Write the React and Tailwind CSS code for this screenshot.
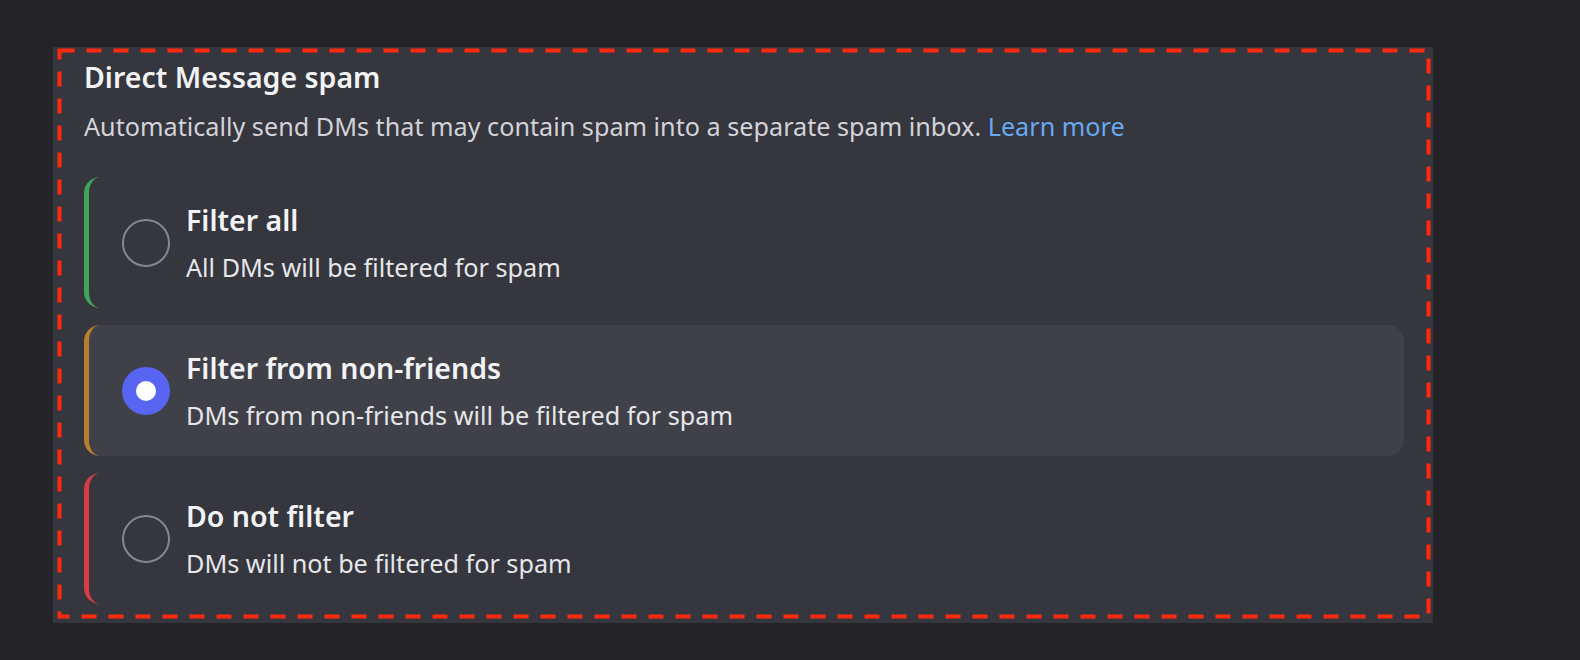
import { useState } from 'react';

const OPTIONS = [
  {
    value: 'ALL',
    label: 'Filter all',
    hint: 'All DMs will be filtered for spam',
    bar: 'border-l-[#3fa55b]',
  },
  {
    value: 'NON_FRIENDS',
    label: 'Filter from non-friends',
    hint: 'DMs from non-friends will be filtered for spam',
    bar: 'border-l-[#b87e2e]',
  },
  {
    value: 'NONE',
    label: 'Do not filter',
    hint: 'DMs will not be filtered for spam',
    bar: 'border-l-[#d83c44]',
  },
];

function Radio({ checked }) {
  if (checked) {
    return (
      <span className="flex items-center justify-center w-12 h-12 shrink-0 rounded-full bg-[#5865f2]">
        <span className="w-5 h-5 rounded-full bg-white" />
      </span>
    );
  }
  return <span className="w-12 h-12 shrink-0 rounded-full border-2 border-[#85878f]" />;
}

export default function App() {
  const [filter, setFilter] = useState('NON_FRIENDS');

  return (
    <div
      className="min-h-screen bg-[#232328] pt-[47px] pl-[53px]"
      style={{ fontFamily: '"Noto Sans", "Open Sans", sans-serif' }}
    >
      <div className="relative w-[1380px] h-[576px] bg-[#35363e] pl-[31px] pr-[29px] pt-[14px]">
        <h2 className="text-[28.5px] leading-[32px] font-semibold text-[#f2f3f5]">
          Direct Message spam
        </h2>
        <p className="mt-[18px] text-[25.2px] leading-[30px] text-[#d2d3d8]">
          Automatically send DMs that may contain spam into a separate spam inbox.{' '}
          <a className="text-[#68a9f2] cursor-pointer">Learn more</a>
        </p>

        {/* Options */}
        <div className="mt-[36px] flex flex-col gap-[17px]">
          {OPTIONS.map((opt) => {
            const active = filter === opt.value;
            return (
              <button
                key={opt.value}
                onClick={() => setFilter(opt.value)}
                className={`flex items-center h-[131px] pl-[33px] text-left rounded-[16px] border-l-[5px] ${opt.bar} ${
                  active ? 'bg-[#3f4048]' : 'bg-transparent'
                }`}
              >
                <Radio checked={active} />
                <div className="ml-[16px]">
                  <p className="text-[28.5px] leading-[34px] font-semibold text-[#f2f3f5]">
                    {opt.label}
                  </p>
                  <p className="mt-[15px] text-[25.2px] leading-[30px] text-[#e6e7ea]">
                    {opt.hint}
                  </p>
                </div>
              </button>
            );
          })}
        </div>

        {/* highlight outline */}
        <svg className="absolute inset-0 pointer-events-none" width="1380" height="576">
          <rect
            x="6.5"
            y="3.5"
            width="1369"
            height="566"
            fill="none"
            stroke="#ff2a0d"
            strokeWidth="4"
            strokeDasharray="15 12"
          />
        </svg>
      </div>
    </div>
  );
}
